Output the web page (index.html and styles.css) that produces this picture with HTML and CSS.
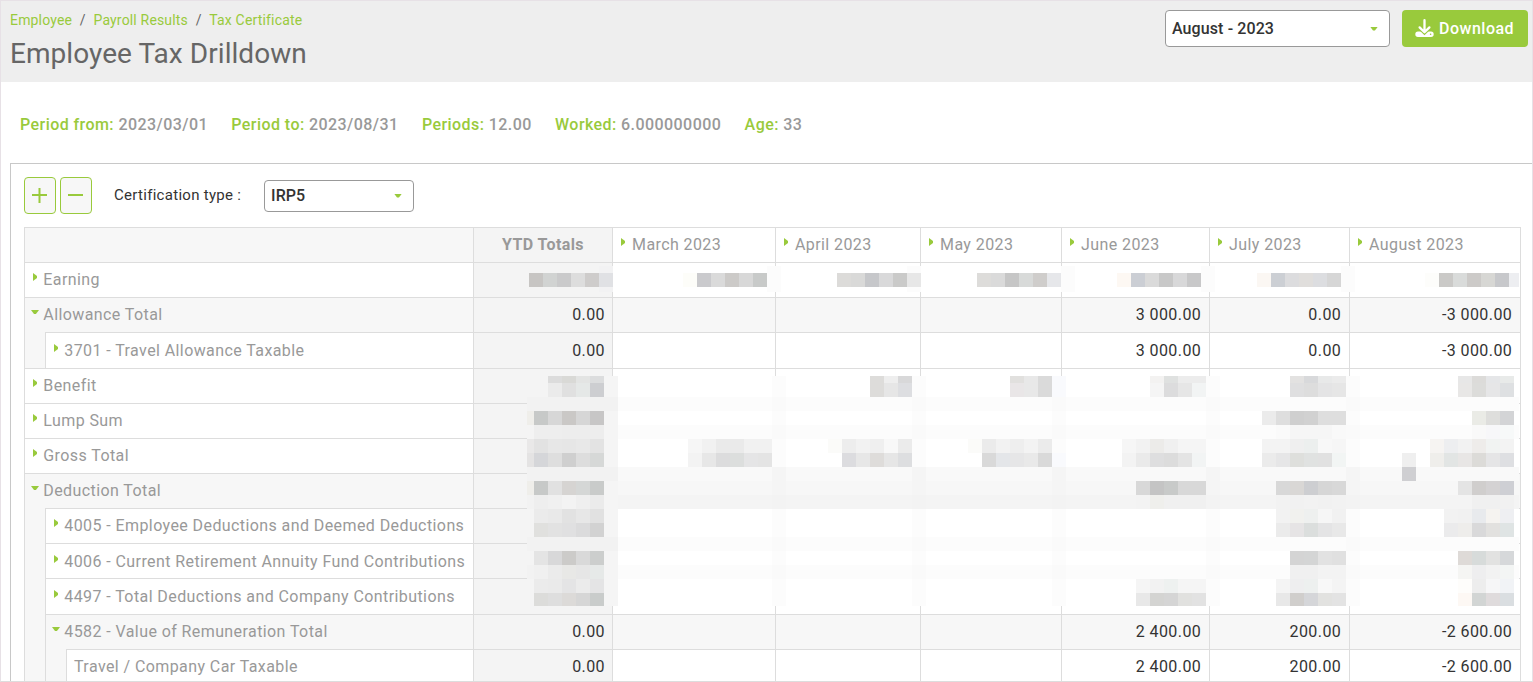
FILE: index.html
```
<!DOCTYPE html>
<html lang="en">
<head>
  <meta charset="UTF-8">
  <title>Employee Tax Drilldown</title>
  <link rel="stylesheet" href="styles.css">
</head>
<body>
  <div class="page">
    <!-- Page header -->
    <header class="header">
      <div class="heading">
        <nav class="breadcrumb">
          <a>Employee</a><span>/</span><a>Payroll Results</a><span>/</span><a>Tax Certificate</a>
        </nav>
        <h1>Employee Tax Drilldown</h1>
      </div>
      <div class="actions">
        <div class="select select-period">August - 2023<i class="caret down"></i></div>
        <button class="download">
          <svg width="19" height="19" viewBox="0 0 19 19">
            <path d="M3 12.500h13a2.700 2.700 0 0 1 0 5.400H3a2.700 2.700 0 0 1 0-5.400z" fill="#fff"/>
            <path d="M9.500 1.800v11M5 9l4.500 4.500L14 9" fill="none" stroke="#99ca3c" stroke-width="4"/>
            <path d="M9.500 1.200v11M4.600 8.400l4.900 4.900 4.900-4.900" fill="none" stroke="#fff" stroke-width="2.300" stroke-linecap="round" stroke-linejoin="round"/>
            <circle cx="15.600" cy="15.300" r=".8" fill="#99ca3c"/>
          </svg>
          <span>Download</span>
        </button>
      </div>
    </header>

    <!-- Period summary -->
    <div class="summary">
      <div><b>Period from:</b> 2023/03/01</div>
      <div><b>Period to:</b> 2023/08/31</div>
      <div><b>Periods:</b> 12.00</div>
      <div><b>Worked:</b> 6.000000000</div>
      <div><b>Age:</b> 33</div>
    </div>

    <!-- Drilldown grid -->
    <main class="panel">
      <div class="toolbar">
        <button class="square"><svg width="16" height="15"><path d="M7.500 0v15M0 7h15"/></svg></button>
        <button class="square"><svg width="16" height="15"><path d="M0 7h15"/></svg></button>
        <label>Certification type :</label>
        <div class="select select-type">IRP5<i class="caret down"></i></div>
      </div>

      <div class="grid">
        <div class="row">
          <div class="name"><div class="label shaded"></div></div>
          <div class="total head">YTD Totals</div>
          <div class="month"><i class="caret right"></i>March 2023</div>
          <div class="month"><i class="caret right"></i>April 2023</div>
          <div class="month"><i class="caret right"></i>May 2023</div>
          <div class="month"><i class="caret right"></i>June 2023</div>
          <div class="month"><i class="caret right"></i>July 2023</div>
          <div class="month"><i class="caret right"></i>August 2023</div>
        </div>
        <div class="row">
          <div class="name"><div class="label"><i class="caret right"></i>Earning</div></div>
          <div class="total"></div><div></div><div></div><div></div><div></div><div></div><div></div>
        </div>
        <div class="row open">
          <div class="name"><div class="label"><i class="caret down"></i>Allowance Total</div></div>
          <div class="total">0.00</div><div></div><div></div><div></div><div>3 000.00</div><div>0.00</div><div>-3 000.00</div>
        </div>
        <div class="row tall low">
          <div class="name"><i class="indent"></i><div class="label"><i class="caret right"></i>3701 - Travel Allowance Taxable</div></div>
          <div class="total">0.00</div><div></div><div></div><div></div><div>3 000.00</div><div>0.00</div><div>-3 000.00</div>
        </div>
        <div class="row">
          <div class="name"><div class="label"><i class="caret right"></i>Benefit</div></div>
          <div class="total"></div><div></div><div></div><div></div><div></div><div></div><div></div>
        </div>
        <div class="row">
          <div class="name"><div class="label"><i class="caret right"></i>Lump Sum</div></div>
          <div class="total"></div><div></div><div></div><div></div><div></div><div></div><div></div>
        </div>
        <div class="row">
          <div class="name"><div class="label"><i class="caret right"></i>Gross Total</div></div>
          <div class="total"></div><div></div><div></div><div></div><div></div><div></div><div></div>
        </div>
        <div class="row open">
          <div class="name"><div class="label"><i class="caret down"></i>Deduction Total</div></div>
          <div class="total"></div><div></div><div></div><div></div><div></div><div></div><div></div>
        </div>
        <div class="row">
          <div class="name"><i class="indent"></i><div class="label"><i class="caret right"></i>4005 - Employee Deductions and Deemed Deductions</div></div>
          <div class="total"></div><div></div><div></div><div></div><div></div><div></div><div></div>
        </div>
        <div class="row low">
          <div class="name"><i class="indent"></i><div class="label"><i class="caret right"></i>4006 - Current Retirement Annuity Fund Contributions</div></div>
          <div class="total"></div><div></div><div></div><div></div><div></div><div></div><div></div>
        </div>
        <div class="row tall low">
          <div class="name"><i class="indent"></i><div class="label"><i class="caret right"></i>4497 - Total Deductions and Company Contributions</div></div>
          <div class="total"></div><div></div><div></div><div></div><div></div><div></div><div></div>
        </div>
        <div class="row open">
          <div class="name"><i class="indent"></i><div class="label"><i class="caret down"></i>4582 - Value of Remuneration Total</div></div>
          <div class="total">0.00</div><div></div><div></div><div></div><div>2 400.00</div><div>200.00</div><div>-2 600.00</div>
        </div>
        <div class="row">
          <div class="name"><i class="indent"></i><i class="indent"></i><div class="label leaf">Travel / Company Car Taxable</div></div>
          <div class="total">0.00</div><div></div><div></div><div></div><div>2 400.00</div><div>200.00</div><div>-2 600.00</div>
        </div>
        <!-- Pixelated cover over the private amounts -->
        <svg class="mask" id="mask" width="1497" height="455" viewBox="24 227 1497 455" shape-rendering="crispEdges"></svg>
      </div>
    </main>
  </div>
  <script src="script.js"></script>
</body>
</html>
```
FILE: styles.css
```
* {
  box-sizing: border-box;
}
body {
  margin: 0;
  font-family: Roboto, "Liberation Sans", sans-serif;
  font-size: 16px;
  letter-spacing: 0.41px;
  color: #333;
  background: #fff;
}
.page {
  height: 682px;
  overflow: hidden;
  border: 1px solid #e7e1e6;
  border-bottom-color: #ddd;
}
button {
  font: inherit;
  letter-spacing: 0.5px;
  padding: 0;
}

/* Header */
.header {
  display: flex;
  justify-content: space-between;
  height: 81px;
  padding: 9px 4px 0 9px;
  background: #eee;
}
.breadcrumb {
  display: flex;
  gap: 7.7px;
  font-size: 14px;
  line-height: 20px;
  letter-spacing: 0.17px;
  color: #666;
}
.breadcrumb a {
  color: #99ca3c;
}
h1 {
  margin: 6px 0 0;
  font-size: 28px;
  line-height: 36px;
  font-weight: 400;
  letter-spacing: 0.05px;
  color: #666;
}
.actions {
  display: flex;
  gap: 12px;
}
.select {
  display: flex;
  align-items: center;
  justify-content: space-between;
  padding: 0 11px 0 6px;
  border: 1px solid #999;
  border-radius: 4px;
  background: #fff;
  font-weight: 500;
  letter-spacing: 0.1px;
}
.select-period {
  width: 225px;
  height: 37px;
}
.select-type {
  width: 150px;
  height: 32px;
}
.download {
  display: flex;
  align-items: center;
  gap: 5px;
  width: 126px;
  height: 37px;
  padding-left: 13px;
  border: 0;
  border-radius: 4px;
  background: #99ca3c;
  color: #fff;
  font-weight: 500;
}

/* Small triangles */
.caret {
  flex: none;
  background: #99ca3c;
}
.caret.down {
  width: 8px;
  height: 4px;
  clip-path: polygon(0 0, 100% 0, 62% 100%, 38% 100%);
}
.caret.right {
  width: 4px;
  height: 8px;
  clip-path: polygon(0 0, 100% 38%, 100% 62%, 0 100%);
}

/* Period summary */
.summary {
  display: flex;
  gap: 23.4px;
  padding: 32px 19px 0;
  height: 81px;
  line-height: 22px;
  font-weight: 500;
  letter-spacing: 0.43px;
  color: #999;
}
.summary b {
  font-weight: 500;
  color: #99ca3c;
}

/* Panel */
.panel {
  height: 530px;
  margin-left: 9px;
  padding: 13px 0 0 13px;
  border: solid #c8c8c8;
  border-width: 1px 0 0 1px;
}
.toolbar {
  display: flex;
  align-items: center;
  height: 37px;
}
.square {
  display: flex;
  align-items: center;
  justify-content: center;
  width: 32px;
  height: 37px;
  margin-right: 4px;
  border: 1px solid #99ca3c;
  border-radius: 4px;
  background: #f7f7f7;
}
.square path {
  stroke: #99ca3c;
  stroke-width: 2;
}
.toolbar label {
  width: 150px;
  margin-left: 18px;
  padding-bottom: 2px;
  font-size: 15px;
  letter-spacing: 0.29px;
}

/* Grid */
.grid {
  position: relative;
  width: 1497px;
  margin-top: 13px;
  border-right: 1px solid #ddd;
}
.row {
  display: grid;
  grid-template-columns: 449px 139px 163px 145px 141px 148px 140px 171px;
  height: 35px;
}
.row.tall {
  height: 36px;
}
.row > div {
  border: solid #ddd;
  border-width: 1px 0 0 1px;
  padding-right: 7.8px;
  line-height: 34px;
  text-align: right;
  white-space: nowrap;
}
.row.low > div,
.row.low .label {
  padding-top: 1px;
}
.row > .name,
.row.low > .name {
  display: flex;
  border: 0;
  padding: 0;
  text-align: left;
  color: #999;
}
.indent {
  width: 21px;
  border-left: 1px solid #ddd;
  background: #f7f7f7;
}
.label {
  flex: 1;
  display: flex;
  padding-left: 8px;
  border: solid #ddd;
  border-width: 1px 0 0 1px;
}
.label .caret.right {
  margin: 10px 6.3px 0 0;
}
.label .caret.down {
  margin: 12px 4.3px 0 -2px;
}
.label.leaf {
  padding-left: 7px;
}
.open > div,
.open .label,
.label.shaded {
  background: #f7f7f7;
}
.row > .total {
  padding-right: 7px;
  background: #f4f4f4;
}
.row > .head {
  padding: 0;
  text-align: center;
  font-weight: 700;
  color: #999;
}
.row > .month {
  display: flex;
  padding-left: 8px;
  color: #999;
}
.month .caret {
  margin: 10px 7px 0 0;
}
.mask {
  position: absolute;
  left: 0;
  top: 0;
}
```
FILE: script.js
```
const mask = document.getElementById("mask");

function block(x, y, w, h, fill) {
  const rect = document.createElementNS("http://www.w3.org/2000/svg", "rect");
  rect.setAttribute("x", x);
  rect.setAttribute("y", y);
  rect.setAttribute("width", w);
  rect.setAttribute("height", h);
  rect.setAttribute("fill", "#" + fill);
  mask.appendChild(rect);
}

// Backgrounds: x, y, width, height, colour
const areas = [
  [599, 266, 14, 26, "f2f2f3"],
  [767, 266, 14, 26, "fcfcfc"],
  [907, 266, 14, 26, "fcfcfc"],
  [1061, 266, 14, 26, "fcfcfc"],
  [1201, 266, 14, 26, "fcfcfc"],
  [1341, 266, 14, 26, "fcfcfc"],
  [527, 376, 77, 230, "f4f4f4"],
  [604, 376, 14, 230, "f5f5f5"],
  [618, 376, 901, 230, "ffffff"]
];
// Vertical bands where the column lines were
[772, 912, 1052, 1206, 1346].forEach(x => areas.push([x, 376, 14, 230, "fcfcfc"]));
// Horizontal bands where the row lines were
[397, 425, 537, 565].forEach(y => areas.push([618, y, 901, 14, "fcfcfc"]));
[397, 467, 537].forEach(y => areas.push([527, y, 91, 14, "f2f2f2"]));
areas.push([618, 467, 901, 14, "f9f9f9"]);
areas.push([618, 481, 901, 14, "f7f7f7"]);
areas.push([618, 495, 901, 14, "f4f4f4"]);
[772, 912, 1052, 1206, 1346].forEach(x => {
  [397, 425, 537, 565].forEach(y => areas.push([x, y, 14, 14, "fafafa"]));
  areas.push([x, 467, 14, 28, "f5f5f5"]);
  areas.push([x, 495, 14, 14, "f3f3f3"]);
});
areas.forEach(a => block(...a));

// Slim blocks on the left edge: y, colour
[[411, "efeeea"], [425, "f4f4f4"], [439, "e9e8e8"], [453, "e4e3e3"], [481, "efeeea"], [495, "f2f2f2"], [565, "f2f2f2"]]
  .forEach(([y, fill]) => block(527, y, 7, 14, fill));

// Runs of 14px blocks: x, y, colours
const runs = [
  [529, 273, "c7c5c3 d1d3d2 cacacb dddddd cecccb e0e1e4"],
  [683, 273, "fdfdf9 cacacd dadada cccac8 d8d8d8 c8cac9"],
  [837, 273, "dcdbd9 d9d9d8 c6c7ca d9d9da cacac9 e7e7e7"],
  [977, 273, "dddcda dadada c6c6c6 d8dad9 cfcdcb e6e7ea"],
  [1117, 273, "fdf8f3 cbced4 dadada c8c8c8 d8d8d9 c8c8c9"],
  [1257, 273, "fbf7f3 cccfd4 dcdcde e0dedc dcdde0 d6d6d6"],
  [1425, 273, "fdfdfb cac9c7 d9dbda cccac8 d7d7d4 c7c8cb"],

  [548, 376, "dcdcdc d9d9d6 e3e4e3 dcddde"],
  [548, 383, "ebebeb e0e0e0 e5e8e7 cdced1"],
  [534, 411, "c7c9c8 d7d7d7 cac8c6 d6d6d6 c7c6c6"],
  [534, 425, "eeeeee eeeeee ededed ededed ededed"],
  [534, 439, "e2e2e2 e7e7e7 e6e6e6 e8e8e8 e3e3e3"],
  [534, 453, "d5d6d9 dedede cfcfcf dddddd d6d8d7"],
  [534, 481, "c7c9c8 e1e1e1 d6d4d2 d5d7d6 c9cbca"],
  [534, 495, "eeeeee f0f0f0 f3f3f3 efefef ebebeb"],
  [534, 509, "ebebeb e9e9e9 e2e2e2 e7e7e7 e1e1e1"],
  [534, 523, "e0e0de e2e2e2 e0e0e1 dbdbdc d2d2d2"],
  [534, 551, "e4e4e4 d8d8d9 cccbc9 d9d9d9 cccecd"],
  [534, 565, "f0f0f0 ebebeb e8e8e6 e6e6e6 e6e9e8"],
  [534, 579, "ebebeb eaeaea e4e4e5 ebebeb e4e4e5"],
  [534, 593, "dcdcda dedede dcdad8 d6d6d6 c9cccb"],

  [688, 439, "f6f6f6 f1f1f1 eaeaea eaeaea f1f1f1 f1f1f1"],
  [688, 453, "f3f3f3 e7e7e7 dcdcdd dcdedd e5e5e6 e4e4e4"],

  [870, 376, "dddcda eeeeee d8d8d9"],
  [870, 383, "dddcda e6e6e6 dddee1"],
  [828, 439, "fbfbf9 ededed f2f2f2 efefef f8f8f8 ebebeb"],
  [842, 453, "dcdcdf e7e7e7 dedcda e6e6e6 dddee0"],

  [1010, 376, "e1e0de e8e8e8 dadada f9fafd"],
  [1010, 383, "e9e6e7 e8e8e8 dadada f9fafd"],
  [968, 439, "fbfbf9 ebebeb f2f2f2 eeeeee f3f3f3 ebebeb"],
  [982, 453, "d9d9d9 e4e6e9 e6e6e7 e9e9e9 d9d9d9 f9fafd"],

  [1150, 376, "f3f2f1 dfe1e0 ececec ececec"],
  [1150, 383, "f5f5f5 dcdcdd e6e6e6 f2f4f4"],
  [1122, 439, "f6f6f6 f2f2f2 ecebe9 f0f0f0 f5f5f5 f5f5f5"],
  [1122, 453, "f3f3f3 eaeaea dededf dcdcdc e4e4e4 f2f4f4"],
  [1136, 481, "d8d8d8 c4c4c4 c8cac9 d8d8d8 d8d8d8"],
  [1136, 495, "f3f3f3 efefec f0f0f0 f0f0f0 f0f0f0"],
  [1136, 579, "f5f5f5 f2f2f2 eef1f0 f5f5f5 f5f5f5"],
  [1136, 593, "e8e8e8 d4d4d2 d5d5d5 e1e1df e2e2e2"],

  [1290, 376, "e3e2e1 d8d9db e8e9e9 ebebeb"],
  [1290, 383, "dfdfe0 dddddd e4e4e5 e6e6e6"],
  [1262, 411, "ebebeb dedede cfcfcf d1d1d1 dedede dedede"],
  [1276, 425, "fafafa f6f6f6 f6f6f6 f6f6f6 f9f9f9"],
  [1262, 439, "f3f3f3 f3f3f3 efefef ecefee f8f8f8 f6f6f6"],
  [1262, 453, "ebebeb e6e6e7 dedfdc e0e2e1 e1e1e1 f2f5f4"],
  [1276, 481, "d8d8d8 d9d7d5 cdced1 d6d6d6 d8d8d8"],
  [1276, 495, "f2f2f2 f1f1f1 f2f2f2 f1f1f1 f2f2f2"],
  [1276, 509, "f2f2f2 f1f1ee eef0ef f6f6f6 f1f1f1"],
  [1276, 523, "ebebeb e6e4e5 dbdedd e4e4e5 e8e8e8"],
  [1290, 551, "d4d4d4 d4d5d5 e2e2e2 e0e0e0"],
  [1290, 565, "f0f0f0 f0f0f0 f3f3f3 f3f3f3"],
  [1276, 579, "f4f4f4 eeeeef edf0ef f8f8f8 f4f4f4"],
  [1276, 593, "e8e8e8 d0cecc d5d6d9 e2e2e0 e3e3e3"],

  [1458, 376, "e7e7e7 dcdbd9 e5e6e8 e8eae9"],
  [1458, 383, "e8e7e6 dcdcda e6e6e7 dee0e2"],
  [1472, 411, "eaebe6 dededc d3d4d6"],
  [1472, 425, "f9f9f9 f7f7f9 f7f9f9"],
  [1430, 439, "f6f4f2 edeef0 f2f2f2 eeecea f1f3f2 f3f3f3"],
  [1430, 453, "efeeeb e2e5e4 e8e6e5 dcdbd8 e5e5e6 dedfe2"],
  [1402, 453, "efefef"],
  [1402, 467, "cfcfd2"],
  [1458, 481, "e4e4e4 d0cecd d4d2d3 cecfd4"],
  [1458, 495, "f4f4f4 f0f0f0 f0f0f0 f1f1f1"],
  [1444, 509, "f2f2f2 f1f1f1 e8eaed f5f3f0 eeeff2"],
  [1444, 523, "ebebec eeedeb d9d9da e2e1df dfe4e4"],
  [1458, 551, "dedad7 d7dbda e2e2e1 d6d8da"],
  [1458, 565, "f5f5f3 eeeeef f2f2f2 f3f5f4"],
  [1458, 579, "fefdfb ededed f6f6f7 f1f3f6"],
  [1458, 593, "fdf8f4 d2d5d4 dfdbdc dadee1"]
];
runs.forEach(([x, y, colours]) => {
  const height = y === 376 ? 7 : y === 593 ? 13 : 14;
  colours.split(" ").forEach((fill, i) => block(x + i * 14, y, 14, height, fill));
});
block(1509, 273, 10, 14, "edeef1");
```
